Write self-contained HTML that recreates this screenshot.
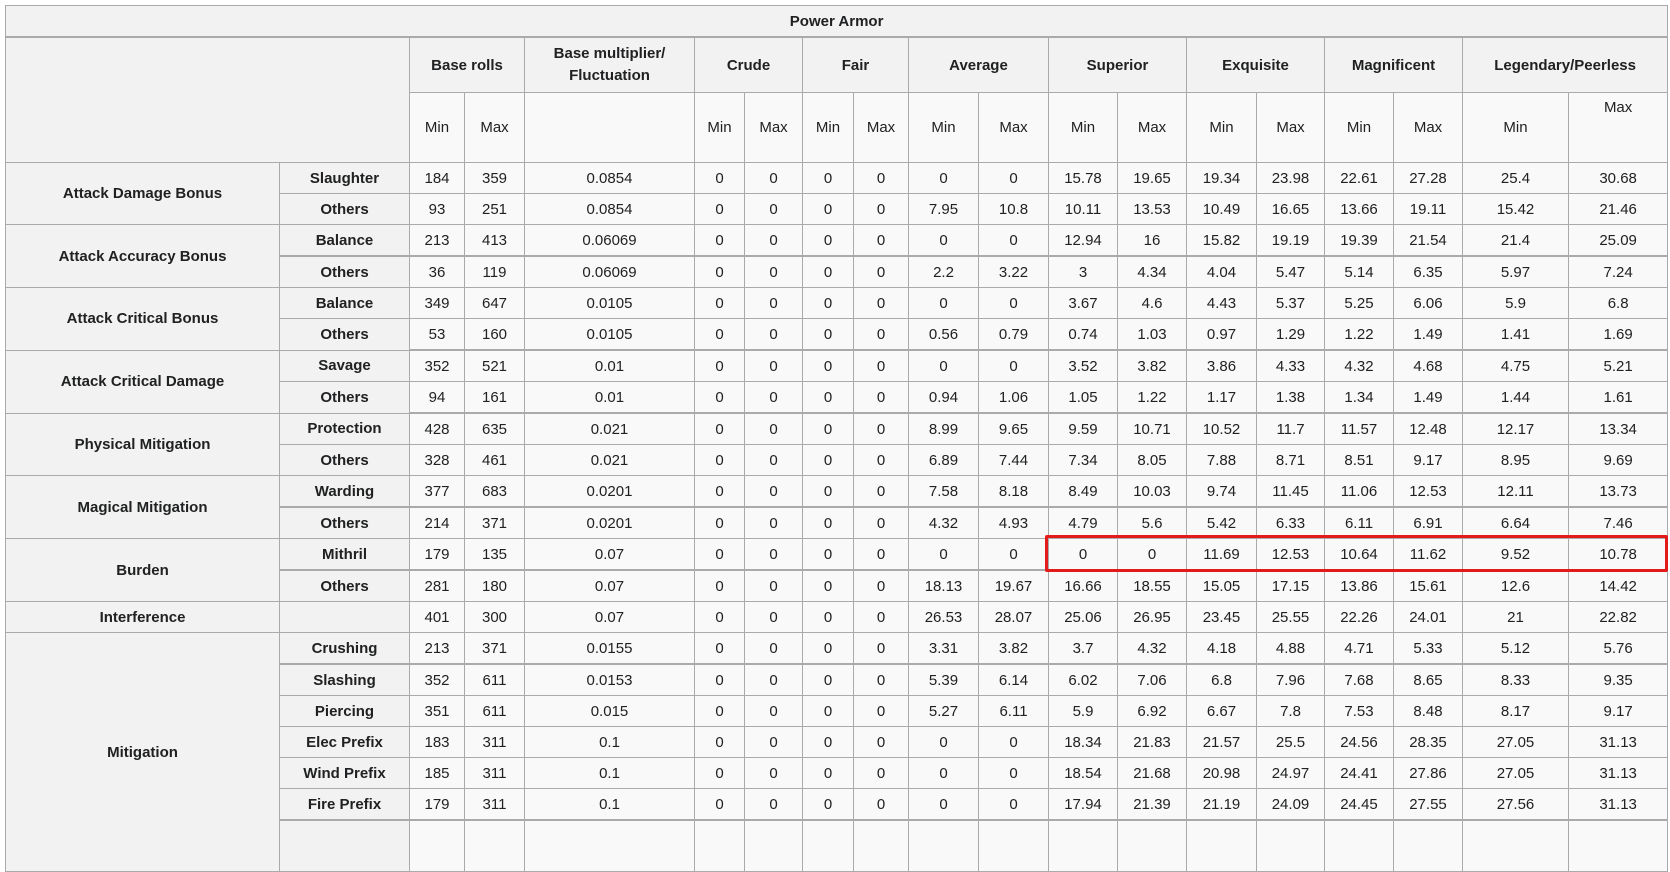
<!DOCTYPE html>
<html><head><meta charset="utf-8"><style>
html,body{margin:0;padding:0;background:#fff;width:1670px;height:824px;overflow:hidden}
table{position:absolute;left:5px;top:5px;border-collapse:collapse;table-layout:fixed;width:1662px;font-family:"Liberation Sans",Arial,sans-serif;font-size:15px;color:#202122}
td,th{border:1px solid #aaaaaa;text-align:center;padding:0;background:#f9f9f9;overflow:hidden;white-space:nowrap;line-height:17px}
th{background:#f2f2f2;font-weight:bold}
tr.d td,tr.d th{height:30px}
.t th{height:30px;border-bottom:2px solid #aaaaaa}
.h1 th{height:54px}
.h2 td{height:63px}
.tk td,.tk th.s{border-bottom:2px solid #aaaaaa}
#red{position:absolute;left:1045px;top:535px;width:617px;height:31px;border:3px solid #e31a1a;border-radius:2px}
</style></head><body>
<table>
<colgroup><col style="width:274px"><col style="width:130px"><col style="width:55px"><col style="width:60px"><col style="width:170px"><col style="width:50px"><col style="width:58px"><col style="width:51px"><col style="width:55px"><col style="width:70px"><col style="width:70px"><col style="width:69px"><col style="width:69px"><col style="width:70px"><col style="width:68px"><col style="width:69px"><col style="width:69px"><col style="width:106px"><col style="width:99px"></colgroup>
<tr class="t"><th colspan="19">Power Armor</th></tr>
<tr class="h1"><th colspan="2" rowspan="2"></th><th colspan="2">Base rolls</th><th style="line-height:22px">Base multiplier/<br>Fluctuation</th><th colspan="2">Crude</th><th colspan="2">Fair</th><th colspan="2">Average</th><th colspan="2">Superior</th><th colspan="2">Exquisite</th><th colspan="2">Magnificent</th><th colspan="2">Legendary/Peerless</th></tr>
<tr class="h2"><td>Min</td><td>Max</td><td></td><td>Min</td><td>Max</td><td>Min</td><td>Max</td><td>Min</td><td>Max</td><td>Min</td><td>Max</td><td>Min</td><td>Max</td><td>Min</td><td>Max</td><td>Min</td><td style="vertical-align:top;padding-top:6px">Max</td></tr>

<tr class="d"><th rowspan="2">Attack Damage Bonus</th><th>Slaughter</th><td>184</td><td>359</td><td>0.0854</td><td>0</td><td>0</td><td>0</td><td>0</td><td>0</td><td>0</td><td>15.78</td><td>19.65</td><td>19.34</td><td>23.98</td><td>22.61</td><td>27.28</td><td>25.4</td><td>30.68</td></tr>
<tr class="d"><th>Others</th><td>93</td><td>251</td><td>0.0854</td><td>0</td><td>0</td><td>0</td><td>0</td><td>7.95</td><td>10.8</td><td>10.11</td><td>13.53</td><td>10.49</td><td>16.65</td><td>13.66</td><td>19.11</td><td>15.42</td><td>21.46</td></tr>
<tr class="d tk"><th rowspan="2">Attack Accuracy Bonus</th><th class="s">Balance</th><td>213</td><td>413</td><td>0.06069</td><td>0</td><td>0</td><td>0</td><td>0</td><td>0</td><td>0</td><td>12.94</td><td>16</td><td>15.82</td><td>19.19</td><td>19.39</td><td>21.54</td><td>21.4</td><td>25.09</td></tr>
<tr class="d"><th>Others</th><td>36</td><td>119</td><td>0.06069</td><td>0</td><td>0</td><td>0</td><td>0</td><td>2.2</td><td>3.22</td><td>3</td><td>4.34</td><td>4.04</td><td>5.47</td><td>5.14</td><td>6.35</td><td>5.97</td><td>7.24</td></tr>
<tr class="d"><th rowspan="2">Attack Critical Bonus</th><th>Balance</th><td>349</td><td>647</td><td>0.0105</td><td>0</td><td>0</td><td>0</td><td>0</td><td>0</td><td>0</td><td>3.67</td><td>4.6</td><td>4.43</td><td>5.37</td><td>5.25</td><td>6.06</td><td>5.9</td><td>6.8</td></tr>
<tr class="d tk"><th>Others</th><td>53</td><td>160</td><td>0.0105</td><td>0</td><td>0</td><td>0</td><td>0</td><td>0.56</td><td>0.79</td><td>0.74</td><td>1.03</td><td>0.97</td><td>1.29</td><td>1.22</td><td>1.49</td><td>1.41</td><td>1.69</td></tr>
<tr class="d"><th rowspan="2">Attack Critical Damage</th><th>Savage</th><td>352</td><td>521</td><td>0.01</td><td>0</td><td>0</td><td>0</td><td>0</td><td>0</td><td>0</td><td>3.52</td><td>3.82</td><td>3.86</td><td>4.33</td><td>4.32</td><td>4.68</td><td>4.75</td><td>5.21</td></tr>
<tr class="d tk"><th>Others</th><td>94</td><td>161</td><td>0.01</td><td>0</td><td>0</td><td>0</td><td>0</td><td>0.94</td><td>1.06</td><td>1.05</td><td>1.22</td><td>1.17</td><td>1.38</td><td>1.34</td><td>1.49</td><td>1.44</td><td>1.61</td></tr>
<tr class="d"><th rowspan="2">Physical Mitigation</th><th>Protection</th><td>428</td><td>635</td><td>0.021</td><td>0</td><td>0</td><td>0</td><td>0</td><td>8.99</td><td>9.65</td><td>9.59</td><td>10.71</td><td>10.52</td><td>11.7</td><td>11.57</td><td>12.48</td><td>12.17</td><td>13.34</td></tr>
<tr class="d"><th>Others</th><td>328</td><td>461</td><td>0.021</td><td>0</td><td>0</td><td>0</td><td>0</td><td>6.89</td><td>7.44</td><td>7.34</td><td>8.05</td><td>7.88</td><td>8.71</td><td>8.51</td><td>9.17</td><td>8.95</td><td>9.69</td></tr>
<tr class="d tk"><th rowspan="2">Magical Mitigation</th><th class="s">Warding</th><td>377</td><td>683</td><td>0.0201</td><td>0</td><td>0</td><td>0</td><td>0</td><td>7.58</td><td>8.18</td><td>8.49</td><td>10.03</td><td>9.74</td><td>11.45</td><td>11.06</td><td>12.53</td><td>12.11</td><td>13.73</td></tr>
<tr class="d"><th>Others</th><td>214</td><td>371</td><td>0.0201</td><td>0</td><td>0</td><td>0</td><td>0</td><td>4.32</td><td>4.93</td><td>4.79</td><td>5.6</td><td>5.42</td><td>6.33</td><td>6.11</td><td>6.91</td><td>6.64</td><td>7.46</td></tr>
<tr class="d tk"><th rowspan="2">Burden</th><th class="s">Mithril</th><td>179</td><td>135</td><td>0.07</td><td>0</td><td>0</td><td>0</td><td>0</td><td>0</td><td>0</td><td>0</td><td>0</td><td>11.69</td><td>12.53</td><td>10.64</td><td>11.62</td><td>9.52</td><td>10.78</td></tr>
<tr class="d"><th>Others</th><td>281</td><td>180</td><td>0.07</td><td>0</td><td>0</td><td>0</td><td>0</td><td>18.13</td><td>19.67</td><td>16.66</td><td>18.55</td><td>15.05</td><td>17.15</td><td>13.86</td><td>15.61</td><td>12.6</td><td>14.42</td></tr>
<tr class="d"><th>Interference</th><th></th><td>401</td><td>300</td><td>0.07</td><td>0</td><td>0</td><td>0</td><td>0</td><td>26.53</td><td>28.07</td><td>25.06</td><td>26.95</td><td>23.45</td><td>25.55</td><td>22.26</td><td>24.01</td><td>21</td><td>22.82</td></tr>
<tr class="d tk"><th rowspan="7">Mitigation</th><th class="s">Crushing</th><td>213</td><td>371</td><td>0.0155</td><td>0</td><td>0</td><td>0</td><td>0</td><td>3.31</td><td>3.82</td><td>3.7</td><td>4.32</td><td>4.18</td><td>4.88</td><td>4.71</td><td>5.33</td><td>5.12</td><td>5.76</td></tr>
<tr class="d"><th>Slashing</th><td>352</td><td>611</td><td>0.0153</td><td>0</td><td>0</td><td>0</td><td>0</td><td>5.39</td><td>6.14</td><td>6.02</td><td>7.06</td><td>6.8</td><td>7.96</td><td>7.68</td><td>8.65</td><td>8.33</td><td>9.35</td></tr>
<tr class="d"><th>Piercing</th><td>351</td><td>611</td><td>0.015</td><td>0</td><td>0</td><td>0</td><td>0</td><td>5.27</td><td>6.11</td><td>5.9</td><td>6.92</td><td>6.67</td><td>7.8</td><td>7.53</td><td>8.48</td><td>8.17</td><td>9.17</td></tr>
<tr class="d"><th>Elec Prefix</th><td>183</td><td>311</td><td>0.1</td><td>0</td><td>0</td><td>0</td><td>0</td><td>0</td><td>0</td><td>18.34</td><td>21.83</td><td>21.57</td><td>25.5</td><td>24.56</td><td>28.35</td><td>27.05</td><td>31.13</td></tr>
<tr class="d"><th>Wind Prefix</th><td>185</td><td>311</td><td>0.1</td><td>0</td><td>0</td><td>0</td><td>0</td><td>0</td><td>0</td><td>18.54</td><td>21.68</td><td>20.98</td><td>24.97</td><td>24.41</td><td>27.86</td><td>27.05</td><td>31.13</td></tr>
<tr class="d tk"><th class="s">Fire Prefix</th><td>179</td><td>311</td><td>0.1</td><td>0</td><td>0</td><td>0</td><td>0</td><td>0</td><td>0</td><td>17.94</td><td>21.39</td><td>21.19</td><td>24.09</td><td>24.45</td><td>27.55</td><td>27.56</td><td>31.13</td></tr>
<tr class="d"><th style="height:50px">&nbsp;</th><td></td><td></td><td></td><td></td><td></td><td></td><td></td><td></td><td></td><td></td><td></td><td></td><td></td><td></td><td></td><td></td><td></td></tr>
</table>
<div id="red"></div>
</body></html>
